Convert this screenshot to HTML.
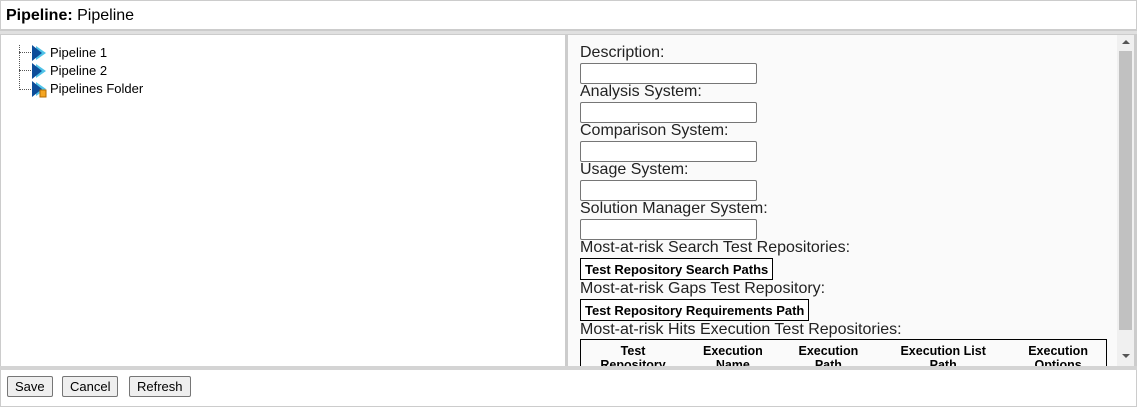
<!DOCTYPE html>
<html><head><style>
*{box-sizing:border-box;margin:0;padding:0}
body{width:1137px;height:407px;background:#fff;font-family:"Liberation Sans",Arial,sans-serif;position:relative;overflow:hidden}
#hdr{position:absolute;left:0;top:0;width:1137px;height:31px;border:1px solid #ccc;border-bottom:2px solid #ccc;font-size:16px;padding:6px 5px}
#sep{position:absolute;left:0;top:31px;width:1137px;height:3px;background:#e0e0e0}
#left{position:absolute;left:0;top:34px;width:568px;height:333px;border:1px solid #ccc;border-right:3px solid #ccc;background:#fff;font-size:13px}
#right{position:absolute;left:568px;top:34px;width:569px;height:333px;background:#fafafa;border-right:3px solid #ccc;border-top:1px solid #ccc;overflow:hidden}
.t{position:absolute;left:49px;color:#000}
.dot{position:absolute;left:18px;width:14px;border-top:1px dotted #555}
.ico{position:absolute;left:31px}
.lbl{position:absolute;left:12px;font-size:16px;color:#222}
.inp{position:absolute;left:12px;width:177px;height:21px;border:1px solid #767676;border-radius:2px;background:#fff}
.btn{position:absolute;left:12px;height:22px;border:1px solid #000;background:#fff;font-size:13px;font-weight:bold;padding:3px 4px}
#sb{position:absolute;left:1117px;top:35px;width:17px;height:331px;background:#f0f0f0}
#thumb{position:absolute;left:1119px;top:51px;width:13px;height:279px;background:#c1c1c1}
#bar2{position:absolute;left:0;top:366px;width:1137px;height:4px;background:#d4d4d4}
#bot{position:absolute;left:0;top:370px;width:1137px;height:37px;border:1px solid #ccc;border-top:none;background:#fff}
.b{position:absolute;top:6px;height:21px;border:1px solid #767676;border-radius:2px;background:#efefef;font-size:13px;padding:2px 7px}
table{position:absolute;left:12px;top:304px;width:527px;border:1px solid #000;border-collapse:collapse;font-size:12.5px;font-weight:bold;text-align:center}
td{padding:4px 2px 0;vertical-align:top;line-height:14px}
</style></head><body>
<div id="hdr"><b>Pipeline:</b> Pipeline</div>
<div id="sep"></div>
<div id="left">
<div style="position:absolute;left:18px;top:10px;height:45px;border-left:1px dotted #555"></div>
<div class="dot" style="top:17px"></div><div class="dot" style="top:35px"></div><div class="dot" style="top:54px"></div>
<svg class="ico" style="top:10px" width="16" height="16"><polygon points="4,1 14,8 4,15" fill="#4fc3e8"/><polygon points="0,0 10,8 0,16" fill="#0d4d9a"/></svg>
<svg class="ico" style="top:28px" width="16" height="16"><polygon points="4,1 14,8 4,15" fill="#4fc3e8"/><polygon points="0,0 10,8 0,16" fill="#0d4d9a"/></svg>
<svg class="ico" style="top:46px" width="16" height="18"><polygon points="4,1 14,8 4,15" fill="#4fc3e8"/><polygon points="0,0 10,8 0,16" fill="#0d4d9a"/><rect x="8" y="9" width="6" height="7" fill="#f5a623" stroke="#b36b00" stroke-width="1"/></svg>
<div class="t" style="top:10px">Pipeline 1</div>
<div class="t" style="top:28px">Pipeline 2</div>
<div class="t" style="top:46px">Pipelines Folder</div>
</div>
<div id="right">
<div class="lbl" style="top:9px">Description:</div><div class="inp" style="top:28px"></div>
<div class="lbl" style="top:48px">Analysis System:</div><div class="inp" style="top:67px"></div>
<div class="lbl" style="top:87px">Comparison System:</div><div class="inp" style="top:106px"></div>
<div class="lbl" style="top:126px">Usage System:</div><div class="inp" style="top:145px"></div>
<div class="lbl" style="top:165px">Solution Manager System:</div><div class="inp" style="top:184px"></div>
<div class="lbl" style="top:204px">Most-at-risk Search Test Repositories:</div>
<div class="btn" style="top:223px">Test Repository Search Paths</div>
<div class="lbl" style="top:245px">Most-at-risk Gaps Test Repository:</div>
<div class="btn" style="top:264px">Test Repository Requirements Path</div>
<div class="lbl" style="top:286px">Most-at-risk Hits Execution Test Repositories:</div>
<table><tr><td>Test<br>Repository</td><td>Execution<br>Name</td><td>Execution<br>Path</td><td>Execution List<br>Path</td><td>Execution<br>Options</td></tr></table>
</div>
<div id="sb"></div><div id="thumb"></div>
<svg style="position:absolute;left:1121px;top:38px" width="10" height="8"><polygon points="1,6 5,2 9,6" fill="#555"/></svg>
<svg style="position:absolute;left:1121px;top:352px" width="10" height="8"><polygon points="1,2 5,6 9,2" fill="#555"/></svg>
<div id="bar2"></div>
<div id="bot">
<div class="b" style="left:6px">Save</div>
<div class="b" style="left:61px">Cancel</div>
<div class="b" style="left:128px">Refresh</div>
</div>
</body></html>
